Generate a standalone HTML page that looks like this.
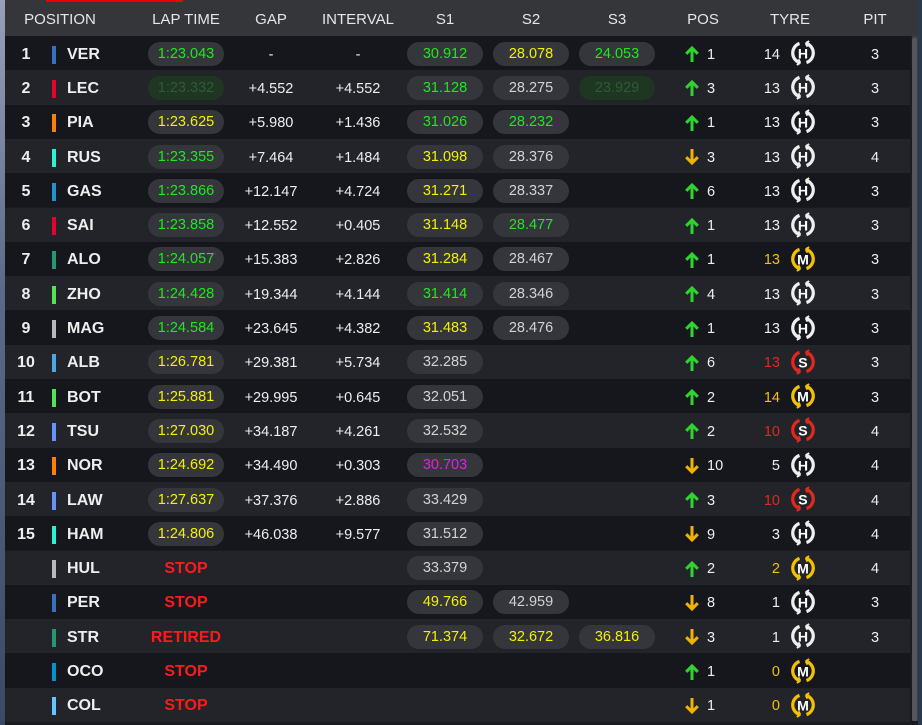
<!DOCTYPE html>
<html><head><meta charset="utf-8"><style>
*{margin:0;padding:0;box-sizing:border-box}
body{width:922px;height:725px;overflow:hidden;background:#2a3a4c;font-family:"Liberation Sans",sans-serif;position:relative}
#left{position:absolute;left:0;top:0;width:5px;height:725px;background:linear-gradient(#9aa0b8,#5a6a88 40%,#3a4a66)}
#panel{position:absolute;left:5px;top:0;width:913px;height:725px;background:#1a1b20}
#hdr{position:absolute;left:0;top:0;width:913px;height:36px;background:#35363a;color:#e6e6e6;font-size:15px}
#hdr span{position:absolute;top:11px;transform:translateX(-50%);white-space:nowrap}
#red{position:absolute;left:41px;top:0;width:137px;height:2px;background:#e00}
.row{position:absolute;left:0;width:905px;height:34.3px;color:#eee;font-size:14.5px}
.o{background:#16171d}.e{background:#232429}
.row>*{position:absolute;top:calc(50% + 1.5px);transform:translate(-50%,-50%);white-space:nowrap}
.p{left:21px;font-weight:bold;font-size:16px}
.b{left:47px;width:4px;height:18px;transform:translateY(-50%)!important}
.c{left:62px;transform:translateY(-50%)!important;font-weight:bold;font-size:16px}
.row>.pl{top:calc(50% + 0.5px)}
.pl{width:76px;height:24px;border-radius:12px;background:#35363b;text-align:center;line-height:25px;font-size:14.5px}
.lt{left:181px}.s1{left:440px}.s2{left:526px}.s3{left:612px}
.g{left:266px}.i{left:353px}
.row>.ar{left:687px;width:14px;height:17px;top:calc(50% + 1px)}
.pn{left:702px;transform:translateY(-50%)!important}
.tn{left:775px;transform:translate(-100%,-50%)!important}
.row>.ty{left:798px;width:26px;height:26px;top:50%}
.pit{left:870px}
.st{left:181px;color:#ff1a1a;font-weight:bold;font-size:16px}
.G{color:#1ee81e}.Y{color:#f2f200}.W{color:#d2d2d2}.P{color:#e020e0}
.F{background:#1e3622;color:#305a36}
.R{color:#e0281e}.Yt{color:#f2c200}
#sb{position:absolute;left:907px;top:36px;width:6px;height:685px;background:#3c3d42}
#th{position:absolute;left:907px;top:38px;width:5px;height:683px;background:#55565b;border-radius:2px}
</style></head><body>
<div id="left"></div>
<div id="panel">
<div id="hdr"><div id="red"></div>
<span style="left:55px">POSITION</span><span style="left:181px">LAP TIME</span><span style="left:266px">GAP</span><span style="left:353px">INTERVAL</span><span style="left:440px">S1</span><span style="left:526px">S2</span><span style="left:612px">S3</span><span style="left:698px">POS</span><span style="left:785px">TYRE</span><span style="left:870px">PIT</span></div>
<svg width="0" height="0" style="position:absolute"><defs>
<symbol id="up" viewBox="0 0 14 17"><path d="M7 16.5V2.5M1.2 8.3L7 2.5l5.8 5.8" fill="none" stroke="#2fd52f" stroke-width="3"/></symbol>
<symbol id="dn" viewBox="0 0 14 17"><path d="M7 0.5v14M1.2 8.7L7 14.5l5.8-5.8" fill="none" stroke="#f0b400" stroke-width="3"/></symbol>
<symbol id="ring" viewBox="0 0 24 24"><path d="M8.8 3.2A9.3 9.3 0 0 0 9.5 21M15.2 20.8A9.3 9.3 0 0 0 14.5 3" fill="none" stroke="currentColor" stroke-width="3"/><path d="M14.5 3l3.2-2M14.5 3l1.6 3.2M9.5 21l-3.2 2M9.5 21l-1.6-3.2" stroke="currentColor" stroke-width="1.8"/></symbol>
</defs></svg>

<div class="row o" style="top:36px"><span class="p">1</span><i class="b" style="background:#3671c6"></i><span class="c">VER</span><span class="pl lt G">1:23.043</span><span class="g">-</span><span class="i">-</span><span class="pl s1 G">30.912</span><span class="pl s2 Y">28.078</span><span class="pl s3 G">24.053</span><svg class="ar"><use href="#up"/></svg><span class="pn">1</span><span class="tn">14</span><svg class="ty" viewBox="0 0 24 24" style="color:#eee"><use href="#ring"/><text x="12" y="17" text-anchor="middle" font-size="13" font-weight="bold" fill="#fff" font-family="Liberation Sans">H</text></svg><span class="pit">3</span></div>
<div class="row e" style="top:70.3px"><span class="p">2</span><i class="b" style="background:#e8002d"></i><span class="c">LEC</span><span class="pl lt F">1:23.332</span><span class="g">+4.552</span><span class="i">+4.552</span><span class="pl s1 G">31.128</span><span class="pl s2 W">28.275</span><span class="pl s3 F">23.929</span><svg class="ar"><use href="#up"/></svg><span class="pn">3</span><span class="tn">13</span><svg class="ty" viewBox="0 0 24 24" style="color:#eee"><use href="#ring"/><text x="12" y="17" text-anchor="middle" font-size="13" font-weight="bold" fill="#fff" font-family="Liberation Sans">H</text></svg><span class="pit">3</span></div>
<div class="row o" style="top:104.6px"><span class="p">3</span><i class="b" style="background:#ff8000"></i><span class="c">PIA</span><span class="pl lt Y">1:23.625</span><span class="g">+5.980</span><span class="i">+1.436</span><span class="pl s1 G">31.026</span><span class="pl s2 G">28.232</span><svg class="ar"><use href="#up"/></svg><span class="pn">1</span><span class="tn">13</span><svg class="ty" viewBox="0 0 24 24" style="color:#eee"><use href="#ring"/><text x="12" y="17" text-anchor="middle" font-size="13" font-weight="bold" fill="#fff" font-family="Liberation Sans">H</text></svg><span class="pit">3</span></div>
<div class="row e" style="top:138.9px"><span class="p">4</span><i class="b" style="background:#27f4d2"></i><span class="c">RUS</span><span class="pl lt G">1:23.355</span><span class="g">+7.464</span><span class="i">+1.484</span><span class="pl s1 Y">31.098</span><span class="pl s2 W">28.376</span><svg class="ar"><use href="#dn"/></svg><span class="pn">3</span><span class="tn">13</span><svg class="ty" viewBox="0 0 24 24" style="color:#eee"><use href="#ring"/><text x="12" y="17" text-anchor="middle" font-size="13" font-weight="bold" fill="#fff" font-family="Liberation Sans">H</text></svg><span class="pit">4</span></div>
<div class="row o" style="top:173.2px"><span class="p">5</span><i class="b" style="background:#2293d1"></i><span class="c">GAS</span><span class="pl lt G">1:23.866</span><span class="g">+12.147</span><span class="i">+4.724</span><span class="pl s1 Y">31.271</span><span class="pl s2 W">28.337</span><svg class="ar"><use href="#up"/></svg><span class="pn">6</span><span class="tn">13</span><svg class="ty" viewBox="0 0 24 24" style="color:#eee"><use href="#ring"/><text x="12" y="17" text-anchor="middle" font-size="13" font-weight="bold" fill="#fff" font-family="Liberation Sans">H</text></svg><span class="pit">3</span></div>
<div class="row e" style="top:207.5px"><span class="p">6</span><i class="b" style="background:#e8002d"></i><span class="c">SAI</span><span class="pl lt G">1:23.858</span><span class="g">+12.552</span><span class="i">+0.405</span><span class="pl s1 Y">31.148</span><span class="pl s2 G">28.477</span><svg class="ar"><use href="#up"/></svg><span class="pn">1</span><span class="tn">13</span><svg class="ty" viewBox="0 0 24 24" style="color:#eee"><use href="#ring"/><text x="12" y="17" text-anchor="middle" font-size="13" font-weight="bold" fill="#fff" font-family="Liberation Sans">H</text></svg><span class="pit">3</span></div>
<div class="row o" style="top:241.8px"><span class="p">7</span><i class="b" style="background:#229971"></i><span class="c">ALO</span><span class="pl lt G">1:24.057</span><span class="g">+15.383</span><span class="i">+2.826</span><span class="pl s1 Y">31.284</span><span class="pl s2 W">28.467</span><svg class="ar"><use href="#up"/></svg><span class="pn">1</span><span class="tn Yt">13</span><svg class="ty" viewBox="0 0 24 24" style="color:#f2c200"><use href="#ring"/><text x="12" y="17" text-anchor="middle" font-size="13" font-weight="bold" fill="#fff" font-family="Liberation Sans">M</text></svg><span class="pit">3</span></div>
<div class="row e" style="top:276.1px"><span class="p">8</span><i class="b" style="background:#52e252"></i><span class="c">ZHO</span><span class="pl lt G">1:24.428</span><span class="g">+19.344</span><span class="i">+4.144</span><span class="pl s1 G">31.414</span><span class="pl s2 W">28.346</span><svg class="ar"><use href="#up"/></svg><span class="pn">4</span><span class="tn">13</span><svg class="ty" viewBox="0 0 24 24" style="color:#eee"><use href="#ring"/><text x="12" y="17" text-anchor="middle" font-size="13" font-weight="bold" fill="#fff" font-family="Liberation Sans">H</text></svg><span class="pit">3</span></div>
<div class="row o" style="top:310.4px"><span class="p">9</span><i class="b" style="background:#b6babd"></i><span class="c">MAG</span><span class="pl lt G">1:24.584</span><span class="g">+23.645</span><span class="i">+4.382</span><span class="pl s1 Y">31.483</span><span class="pl s2 W">28.476</span><svg class="ar"><use href="#up"/></svg><span class="pn">1</span><span class="tn">13</span><svg class="ty" viewBox="0 0 24 24" style="color:#eee"><use href="#ring"/><text x="12" y="17" text-anchor="middle" font-size="13" font-weight="bold" fill="#fff" font-family="Liberation Sans">H</text></svg><span class="pit">3</span></div>
<div class="row e" style="top:344.7px"><span class="p">10</span><i class="b" style="background:#4aa8e8"></i><span class="c">ALB</span><span class="pl lt Y">1:26.781</span><span class="g">+29.381</span><span class="i">+5.734</span><span class="pl s1 W">32.285</span><svg class="ar"><use href="#up"/></svg><span class="pn">6</span><span class="tn R">13</span><svg class="ty" viewBox="0 0 24 24" style="color:#e0281e"><use href="#ring"/><text x="12" y="17" text-anchor="middle" font-size="13" font-weight="bold" fill="#fff" font-family="Liberation Sans">S</text></svg><span class="pit">3</span></div>
<div class="row o" style="top:379px"><span class="p">11</span><i class="b" style="background:#52e252"></i><span class="c">BOT</span><span class="pl lt Y">1:25.881</span><span class="g">+29.995</span><span class="i">+0.645</span><span class="pl s1 W">32.051</span><svg class="ar"><use href="#up"/></svg><span class="pn">2</span><span class="tn Yt">14</span><svg class="ty" viewBox="0 0 24 24" style="color:#f2c200"><use href="#ring"/><text x="12" y="17" text-anchor="middle" font-size="13" font-weight="bold" fill="#fff" font-family="Liberation Sans">M</text></svg><span class="pit">3</span></div>
<div class="row e" style="top:413.3px"><span class="p">12</span><i class="b" style="background:#6692ff"></i><span class="c">TSU</span><span class="pl lt Y">1:27.030</span><span class="g">+34.187</span><span class="i">+4.261</span><span class="pl s1 W">32.532</span><svg class="ar"><use href="#up"/></svg><span class="pn">2</span><span class="tn R">10</span><svg class="ty" viewBox="0 0 24 24" style="color:#e0281e"><use href="#ring"/><text x="12" y="17" text-anchor="middle" font-size="13" font-weight="bold" fill="#fff" font-family="Liberation Sans">S</text></svg><span class="pit">4</span></div>
<div class="row o" style="top:447.6px"><span class="p">13</span><i class="b" style="background:#ff8000"></i><span class="c">NOR</span><span class="pl lt Y">1:24.692</span><span class="g">+34.490</span><span class="i">+0.303</span><span class="pl s1 P">30.703</span><svg class="ar"><use href="#dn"/></svg><span class="pn">10</span><span class="tn">5</span><svg class="ty" viewBox="0 0 24 24" style="color:#eee"><use href="#ring"/><text x="12" y="17" text-anchor="middle" font-size="13" font-weight="bold" fill="#fff" font-family="Liberation Sans">H</text></svg><span class="pit">4</span></div>
<div class="row e" style="top:481.9px"><span class="p">14</span><i class="b" style="background:#6692ff"></i><span class="c">LAW</span><span class="pl lt Y">1:27.637</span><span class="g">+37.376</span><span class="i">+2.886</span><span class="pl s1 W">33.429</span><svg class="ar"><use href="#up"/></svg><span class="pn">3</span><span class="tn R">10</span><svg class="ty" viewBox="0 0 24 24" style="color:#e0281e"><use href="#ring"/><text x="12" y="17" text-anchor="middle" font-size="13" font-weight="bold" fill="#fff" font-family="Liberation Sans">S</text></svg><span class="pit">4</span></div>
<div class="row o" style="top:516.2px"><span class="p">15</span><i class="b" style="background:#27f4d2"></i><span class="c">HAM</span><span class="pl lt Y">1:24.806</span><span class="g">+46.038</span><span class="i">+9.577</span><span class="pl s1 W">31.512</span><svg class="ar"><use href="#dn"/></svg><span class="pn">9</span><span class="tn">3</span><svg class="ty" viewBox="0 0 24 24" style="color:#eee"><use href="#ring"/><text x="12" y="17" text-anchor="middle" font-size="13" font-weight="bold" fill="#fff" font-family="Liberation Sans">H</text></svg><span class="pit">4</span></div>
<div class="row e" style="top:550.5px"><i class="b" style="background:#b6babd"></i><span class="c">HUL</span><span class="st">STOP</span><span class="pl s1 W">33.379</span><svg class="ar"><use href="#up"/></svg><span class="pn">2</span><span class="tn Yt">2</span><svg class="ty" viewBox="0 0 24 24" style="color:#f2c200"><use href="#ring"/><text x="12" y="17" text-anchor="middle" font-size="13" font-weight="bold" fill="#fff" font-family="Liberation Sans">M</text></svg><span class="pit">4</span></div>
<div class="row o" style="top:584.8px"><i class="b" style="background:#3671c6"></i><span class="c">PER</span><span class="st">STOP</span><span class="pl s1 Y">49.766</span><span class="pl s2 W">42.959</span><svg class="ar"><use href="#dn"/></svg><span class="pn">8</span><span class="tn">1</span><svg class="ty" viewBox="0 0 24 24" style="color:#eee"><use href="#ring"/><text x="12" y="17" text-anchor="middle" font-size="13" font-weight="bold" fill="#fff" font-family="Liberation Sans">H</text></svg><span class="pit">3</span></div>
<div class="row e" style="top:619.1px"><i class="b" style="background:#229971"></i><span class="c">STR</span><span class="st">RETIRED</span><span class="pl s1 Y">71.374</span><span class="pl s2 Y">32.672</span><span class="pl s3 Y">36.816</span><svg class="ar"><use href="#dn"/></svg><span class="pn">3</span><span class="tn">1</span><svg class="ty" viewBox="0 0 24 24" style="color:#eee"><use href="#ring"/><text x="12" y="17" text-anchor="middle" font-size="13" font-weight="bold" fill="#fff" font-family="Liberation Sans">H</text></svg><span class="pit">3</span></div>
<div class="row o" style="top:653.4px"><i class="b" style="background:#0093cc"></i><span class="c">OCO</span><span class="st">STOP</span><svg class="ar"><use href="#up"/></svg><span class="pn">1</span><span class="tn Yt">0</span><svg class="ty" viewBox="0 0 24 24" style="color:#f2c200"><use href="#ring"/><text x="12" y="17" text-anchor="middle" font-size="13" font-weight="bold" fill="#fff" font-family="Liberation Sans">M</text></svg></div>
<div class="row e" style="top:687.7px"><i class="b" style="background:#64c4ff"></i><span class="c">COL</span><span class="st">STOP</span><svg class="ar"><use href="#dn"/></svg><span class="pn">1</span><span class="tn Yt">0</span><svg class="ty" viewBox="0 0 24 24" style="color:#f2c200"><use href="#ring"/><text x="12" y="17" text-anchor="middle" font-size="13" font-weight="bold" fill="#fff" font-family="Liberation Sans">M</text></svg></div>
<div id="sb"></div><div id="th"></div>
</div>
</body></html>
